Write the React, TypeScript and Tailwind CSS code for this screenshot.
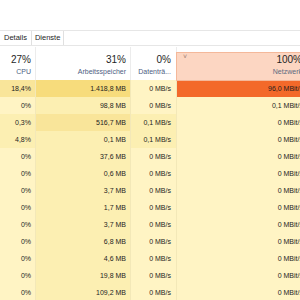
import React from "react";

type Row = {
  cpu: string;
  mem: string;
  disk: string;
  net: string;
  cpuBg: string;
  memBg: string;
  diskBg: string;
  netBg: string;
};

const Y0 = "bg-[#fff4c4]";
const Y1 = "bg-[#fcefb2]";
const Y2 = "bg-[#f9e59a]";
const Y3 = "bg-[#f7dc7c]";

const rows: Row[] = [
  { cpu: "18,4%", mem: "1.418,8 MB", disk: "0 MB/s", net: "96,0 MBit/s", cpuBg: Y2, memBg: Y3, diskBg: Y0, netBg: "bg-[#f3692a]" },
  { cpu: "0%", mem: "98,8 MB", disk: "0 MB/s", net: "0,1 MBit/s", cpuBg: Y0, memBg: Y1, diskBg: Y0, netBg: Y0 },
  { cpu: "0,3%", mem: "516,7 MB", disk: "0,1 MB/s", net: "0 MBit/s", cpuBg: Y1, memBg: Y2, diskBg: Y1, netBg: Y0 },
  { cpu: "4,8%", mem: "0,1 MB", disk: "0,1 MB/s", net: "0 MBit/s", cpuBg: Y1, memBg: Y1, diskBg: Y1, netBg: Y0 },
  { cpu: "0%", mem: "37,6 MB", disk: "0 MB/s", net: "0 MBit/s", cpuBg: Y0, memBg: Y1, diskBg: Y0, netBg: Y0 },
  { cpu: "0%", mem: "0,6 MB", disk: "0 MB/s", net: "0 MBit/s", cpuBg: Y0, memBg: Y1, diskBg: Y0, netBg: Y0 },
  { cpu: "0%", mem: "3,7 MB", disk: "0 MB/s", net: "0 MBit/s", cpuBg: Y0, memBg: Y1, diskBg: Y0, netBg: Y0 },
  { cpu: "0%", mem: "1,7 MB", disk: "0 MB/s", net: "0 MBit/s", cpuBg: Y0, memBg: Y1, diskBg: Y0, netBg: Y0 },
  { cpu: "0%", mem: "3,7 MB", disk: "0 MB/s", net: "0 MBit/s", cpuBg: Y0, memBg: Y1, diskBg: Y0, netBg: Y0 },
  { cpu: "0%", mem: "6,8 MB", disk: "0 MB/s", net: "0 MBit/s", cpuBg: Y0, memBg: Y1, diskBg: Y0, netBg: Y0 },
  { cpu: "0%", mem: "4,6 MB", disk: "0 MB/s", net: "0 MBit/s", cpuBg: Y0, memBg: Y1, diskBg: Y0, netBg: Y0 },
  { cpu: "0%", mem: "19,8 MB", disk: "0 MB/s", net: "0 MBit/s", cpuBg: Y0, memBg: Y1, diskBg: Y0, netBg: Y0 },
  { cpu: "0%", mem: "109,2 MB", disk: "0 MB/s", net: "0 MBit/s", cpuBg: Y0, memBg: Y1, diskBg: Y0, netBg: Y0 },
];

const grid = "grid grid-cols-[36px_95px_46px_130px]";

export default function App() {
  return (
    <div className="w-[300px] h-[300px] overflow-hidden bg-white font-['Liberation_Sans',Arial,sans-serif] text-[#1e1e1e]">
      {/* Menu area */}
      <div className="h-[30px] bg-white" />

      {/* Tabs */}
      <div className="h-[16px] flex border-t border-b border-[#e6e6e6] text-[7.5px] leading-[14px]">
        <div className="px-[4px] border-r border-[#e0e0e0]">Details</div>
        <div className="px-[3px] border-r border-[#e0e0e0]">Dienste</div>
      </div>

      <div className="w-[307px]">
        {/* Header */}
        <div className={`${grid} h-[33px] mt-[1px]`}>
          <div className="flex flex-col items-end pr-[4px] pt-[6px] border-r border-[#ececec]">
            <span className="text-[10px] leading-[13px]">27%</span>
            <span className="text-[7px] leading-[12px] text-[#4d6082]">CPU</span>
          </div>
          <div className="flex flex-col items-end pr-[4px] pt-[6px] border-r border-[#ececec]">
            <span className="text-[10px] leading-[13px]">31%</span>
            <span className="text-[7px] leading-[12px] text-[#4d6082]">Arbeitsspeicher</span>
          </div>
          <div className="flex flex-col items-end pr-[5px] pt-[6px] border-r border-[#ececec] overflow-hidden">
            <span className="text-[10px] leading-[13px]">0%</span>
            <span className="text-[7px] leading-[12px] text-[#4d6082] whitespace-nowrap">Datenträ...</span>
          </div>
          <div className="relative -ml-[1px] mt-[5px] -mb-[1px] bg-[#fcd6c2] border border-[#f4b89a]">
            <span className="absolute left-[6px] top-[0px] text-[7px] leading-[8px] text-[#a08070]">˅</span>
            <div className="flex flex-col items-end pr-[4px] pt-[0px]">
              <span className="text-[10px] leading-[13px]">100%</span>
              <span className="text-[7px] leading-[12px] text-[#5d6a80]">Netzwerk</span>
            </div>
          </div>
        </div>

        {/* Rows */}
        {rows.map((r, i) => (
          <div key={i} className={`${grid} h-[17px] text-[7px] leading-[17px] whitespace-nowrap`}>
            <div className={`${r.cpuBg} text-right pr-[4px] border-r border-[#f3e8b8]`}>{r.cpu}</div>
            <div className={`${r.memBg} text-right pr-[4px] border-r border-[#f3e8b8]`}>{r.mem}</div>
            <div className={`${r.diskBg} text-right pr-[5px] border-r border-[#f3e8b8]`}>{r.disk}</div>
            <div className={`${r.netBg} text-right pr-[4px]`}>{r.net}</div>
          </div>
        ))}
      </div>
    </div>
  );
}
